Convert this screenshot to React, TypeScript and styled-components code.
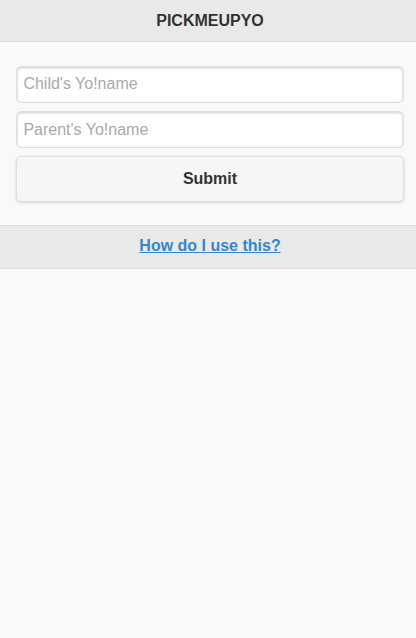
import { createGlobalStyle, styled } from 'styled-components';

const GlobalStyles = createGlobalStyle`
  html {
    overflow-x: hidden;
    background: #f9f9f9;
  }
  body {
    margin: 0;
    width: 420px;
    background: #f9f9f9;
    font-family: "Liberation Sans", Arial, sans-serif;
    color: #333;
  }
`;

const Header = styled.header`
  background: #e9e9e9;
  border-bottom: 1px solid #dddddd;
  text-align: center;
`;

const Title = styled.h1`
  margin: 0;
  padding: 9.5px 0 10.5px;
  font-size: 16px;
  line-height: 21px;
  font-weight: bold;
  color: #333;
`;

const Content = styled.main`
  padding: 24px 16px 23px;
  display: flex;
  flex-direction: column;
  gap: 8px;
`;

const InputWrap = styled.div`
  background: #fff;
  border: 1px solid #dddddd;
  border-radius: 5px;
  box-shadow: inset 0 1px 3px rgba(0, 0, 0, 0.2);
`;

const TextInput = styled.input`
  display: block;
  width: 100%;
  box-sizing: border-box;
  border: 0;
  background: transparent;
  outline: none;
  padding: 6.4px;
  font-family: inherit;
  font-size: 16px;
  line-height: 22.4px;
  color: #333;

  &::placeholder {
    color: #a9a9a9;
  }
`;

const Button = styled.button`
  display: block;
  width: 100%;
  box-sizing: border-box;
  padding: 11.2px 16px;
  background: #f6f6f6;
  border: 1px solid #dddddd;
  border-radius: 5px;
  box-shadow: 0 1px 3px rgba(0, 0, 0, 0.15);
  font-family: inherit;
  font-size: 16px;
  line-height: 20.8px;
  font-weight: bold;
  color: #333;
  text-shadow: 0 1px 0 #f3f3f3;
  cursor: pointer;
`;

const Footer = styled.footer`
  background: #e9e9e9;
  border-top: 1px solid #dddddd;
  border-bottom: 1px solid #dddddd;
  text-align: center;
`;

const FooterTitle = styled.h4`
  margin: 0;
  padding: 10.8px 0 10.6px;
  font-size: 16px;
  line-height: 20.8px;
  font-weight: bold;
`;

const HelpLink = styled.a`
  color: #3388cc;
  text-decoration: underline;
`;

function App() {
  return (
    <>
      <GlobalStyles />
      <Header>
        <Title>PICKMEUPYO</Title>
      </Header>
      <Content>
        <InputWrap>
          <TextInput type="text" placeholder="Child's Yo!name" />
        </InputWrap>
        <InputWrap>
          <TextInput type="text" placeholder="Parent's Yo!name" />
        </InputWrap>
        <Button type="button">Submit</Button>
      </Content>
      <Footer>
        <FooterTitle>
          <HelpLink href="#">How do I use this?</HelpLink>
        </FooterTitle>
      </Footer>
    </>
  );
}

export default App;
